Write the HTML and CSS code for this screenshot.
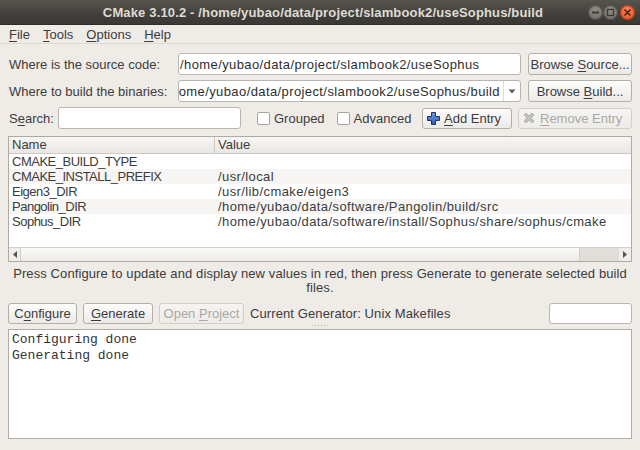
FILE: index.html
```html
<!DOCTYPE html>
<html lang="en">
<head>
<meta charset="utf-8">
<title>CMake</title>
<link rel="stylesheet" href="styles.css">
</head>
<body>
<div class="window">
  <header class="titlebar">
    <span class="title">CMake 3.10.2 - /home/yubao/data/project/slambook2/useSophus/build</span>
    <span class="wbtns">
      <span class="wbtn wbtn-min"><svg width="15" height="15" viewBox="0 0 15 15"><rect x="4" y="6.5" width="7" height="2" fill="#3a3935"/></svg></span>
      <span class="wbtn wbtn-max"><svg width="15" height="15" viewBox="0 0 15 15"><rect x="4.5" y="4.5" width="6" height="6" fill="none" stroke="#3a3935" stroke-width="1.3"/></svg></span>
      <span class="wbtn wbtn-close"><svg width="15" height="15" viewBox="0 0 15 15"><path d="M5 5L10 10M10 5L5 10" stroke="#4a1e10" stroke-width="1.6" stroke-linecap="round"/></svg></span>
    </span>
  </header>
  <nav class="menubar">
    <span><u>F</u>ile</span><span><u>T</u>ools</span><span><u>O</u>ptions</span><span><u>H</u>elp</span>
  </nav>
  <main class="content">
    <div class="paths">
      <span class="label">Where is the source code:</span>
      <div class="field"><span class="field-text path">/home/yubao/data/project/slambook2/useSophus</span></div>
      <div class="btn"><span>Browse <u>S</u>ource...</span></div>
      <span class="label">Where to build the binaries:</span>
      <div class="field combo">
        <span class="combo-clip"><span class="field-text path">/home/yubao/data/project/slambook2/useSophus/build</span></span>
        <span class="combo-arrow"><svg width="8" height="5" viewBox="0 0 8 5"><path d="M0.5 0.5H7.5L4 4.5Z" fill="#5e5c58"/></svg></span>
      </div>
      <div class="btn"><span>Browse <u>B</u>uild...</span></div>
    </div>

    <div class="searchrow">
      <span class="label search-label">S<u>e</u>arch:</span>
      <div class="field search"></div>
      <span class="check"><span class="box"></span>Grouped</span>
      <span class="check"><span class="box"></span>Advanced</span>
      <div class="btn add">
        <svg width="13" height="13" viewBox="0 0 13 13"><defs><linearGradient id="pg" x1="0" y1="0" x2="0" y2="1"><stop offset="0" stop-color="#6f9ae0"/><stop offset="1" stop-color="#2f5fb3"/></linearGradient></defs><path d="M4.5 0.5H8.5V4.5H12.5V8.5H8.5V12.5H4.5V8.5H0.5V4.5H4.5Z" fill="url(#pg)" stroke="#1c3566" stroke-width="1"/></svg>
        <span><u>A</u>dd Entry</span>
      </div>
      <div class="btn disabled remove">
        <svg width="12" height="12" viewBox="0 0 12 12"><path d="M1 3L3 1L6 4L9 1L11 3L8 6L11 9L9 11L6 8L3 11L1 9L4 6Z" fill="#c2c0bc" stroke="#a9a7a3" stroke-width="0.8" stroke-linejoin="round"/></svg>
        <span><u>R</u>emove Entry</span>
      </div>
    </div>

    <div class="table">
      <div class="thead"><span class="cell">Name</span><span class="cell">Value</span></div>
      <div class="tbody">
        <div class="trow"><span class="cell name">CMAKE_BUILD_TYPE</span><span class="cell path"></span></div>
        <div class="trow alt"><span class="cell name">CMAKE_INSTALL_PREFIX</span><span class="cell path">/usr/local</span></div>
        <div class="trow"><span class="cell name">Eigen3_DIR</span><span class="cell path">/usr/lib/cmake/eigen3</span></div>
        <div class="trow alt"><span class="cell name">Pangolin_DIR</span><span class="cell path">/home/yubao/data/software/Pangolin/build/src</span></div>
        <div class="trow"><span class="cell name">Sophus_DIR</span><span class="cell path">/home/yubao/data/software/install/Sophus/share/sophus/cmake</span></div>
      </div>
      <div class="hscroll">
        <span class="sarrow left"><svg width="4" height="7" viewBox="0 0 4 7"><path d="M4 0V7L0 3.5Z" fill="#55534f"/></svg></span>
        <span class="shandle"></span>
        <span class="strough"></span>
        <span class="sarrow right"><svg width="4" height="7" viewBox="0 0 4 7"><path d="M0 0V7L4 3.5Z" fill="#55534f"/></svg></span>
      </div>
    </div>

    <p class="info">Press Configure to update and display new values in red, then press Generate to generate selected build files.</p>

    <div class="actions">
      <div class="btn cfg"><span>C<u>o</u>nfigure</span></div>
      <div class="btn gen"><span><u>G</u>enerate</span></div>
      <div class="btn disabled open"><span>Open <u>P</u>roject</span></div>
      <span class="generator">Current Generator: Unix Makefiles</span>
      <div class="field gen-field"></div>
    </div>
    <div class="splitter"><span class="grip"></span></div>
    <pre class="console">Configuring done
Generating done</pre>
  </main>
</div>
</body>
</html>
```

FILE: styles.css
```css
* { box-sizing: border-box; }
html, body { margin: 0; padding: 0; }
body {
  width: 640px;
  height: 450px;
  overflow: hidden;
  background: #efebe7;
  font-family: "Liberation Sans", Arial, sans-serif;
  font-size: 13px;
  color: #3c3c3c;
}
u {
  text-decoration: underline;
  text-decoration-thickness: 1px;
  text-underline-offset: 2px;
}
.window {
  display: flex;
  flex-direction: column;
  height: 450px;
}

/* title bar */
.titlebar {
  flex: 0 0 25px;
  display: grid;
  grid-template-columns: 1fr auto 1fr;
  align-items: center;
  background: linear-gradient(#55544e, #3e3d39 70%, #3a3935);
  border-bottom: 1px solid #2e2d2a;
}
.title {
  grid-column: 2;
  color: #dfdbd2;
  font-weight: bold;
  font-size: 13px;
  letter-spacing: 0.15px;
  white-space: nowrap;
  padding-left: 6px;
}
.wbtns {
  grid-column: 3;
  justify-self: end;
  display: flex;
  align-items: center;
  padding-right: 5px;
}
.wbtn {
  width: 15px;
  height: 15px;
  border-radius: 50%;
  display: flex;
}
.wbtn-min, .wbtn-max {
  background: radial-gradient(circle at 50% 35%, #8f8d87, #6a6863);
  box-shadow: inset 0 0 0 1px #4b4a45;
}
.wbtn-close {
  margin-left: 2px;
  background: radial-gradient(circle at 50% 35%, #f7875d, #e2471c);
  box-shadow: inset 0 0 0 1px #a83a1a;
}

/* menu bar */
.menubar {
  flex: 0 0 19px;
  display: flex;
  align-items: center;
  gap: 13px;
  padding-left: 9px;
  border-bottom: 1px solid #dcd8d2;
}

/* content */
.content {
  flex: 1;
  min-height: 0;
  display: flex;
  flex-direction: column;
  padding: 9px 8px 11px;
}
.paths {
  display: grid;
  grid-template-columns: 163px 343px 104px;
  grid-auto-rows: 22px;
  column-gap: 7px;
  row-gap: 5px;
}
.label {
  padding-left: 1px;
  align-self: center;
  white-space: nowrap;
}
.path { letter-spacing: 0.4px; }
.field {
  background: #fff;
  border: 1px solid #b9b5af;
  border-radius: 3px;
  display: flex;
  align-items: center;
  padding: 0 1px;
  overflow: hidden;
  white-space: nowrap;
  color: #2e2e2e;
}
.combo { padding: 0; }
.combo-clip {
  flex: 1;
  min-width: 0;
  display: flex;
  justify-content: flex-end;
  overflow: hidden;
  padding-right: 3px;
}
.combo-clip .field-text { flex-shrink: 0; }
.combo-arrow {
  width: 17px;
  align-self: stretch;
  display: flex;
  align-items: center;
  justify-content: center;
  border-left: 1px solid #e0ddd8;
}

.btn {
  display: flex;
  align-items: center;
  justify-content: center;
  border: 1px solid #b3afa9;
  border-radius: 3px;
  background: linear-gradient(#fcfcfb, #ecEAe7);
  white-space: nowrap;
  color: #3c3c3c;
}
.btn.disabled {
  color: #aaa8a4;
  border-color: #d2cec8;
  background: linear-gradient(#f5f4f2, #eeece9);
}

/* search row */
.searchrow {
  display: flex;
  align-items: center;
  height: 22px;
  margin-top: 5px;
}
.search-label { width: 50px; }
.search { width: 183px; height: 22px; }
.check {
  display: flex;
  align-items: center;
  gap: 4px;
  margin-left: 16px;
}
.check + .check { margin-left: 12px; }
.box {
  width: 13px;
  height: 13px;
  background: #fff;
  border: 1px solid #a8a49e;
  border-radius: 2px;
}
.add {
  margin-left: auto;
  width: 90px;
  height: 21px;
  justify-content: flex-start;
  padding-left: 4px;
  gap: 4px;
}
.remove {
  margin-left: 6px;
  width: 114px;
  height: 21px;
  justify-content: flex-start;
  padding-left: 4px;
  gap: 5px;
}

/* table */
.table {
  margin-top: 7px;
  height: 126px;
  flex-shrink: 0;
  border: 1px solid #aeaaa4;
  background: #fff;
  display: flex;
  flex-direction: column;
}
.thead {
  display: grid;
  grid-template-columns: 205px 1fr;
  height: 17px;
  background: linear-gradient(#f7f6f4, #e9e7e4);
  border-bottom: 1px solid #cdc9c3;
  line-height: 16px;
}
.thead .cell + .cell { border-left: 1px solid #cdc9c3; }
.cell {
  padding-left: 3px;
  white-space: nowrap;
  overflow: hidden;
}
.cell.name { letter-spacing: -0.5px; }
.tbody { flex: 1; }
.trow {
  display: grid;
  grid-template-columns: 205px 1fr;
  height: 15px;
  line-height: 15px;
}
.trow .cell + .cell { padding-left: 4px; }
.trow.alt { background: #f6f5f3; }
.hscroll {
  height: 14px;
  display: flex;
  border-top: 1px solid #d3cfca;
  background: #efedea;
}
.sarrow {
  width: 12px;
  display: flex;
  align-items: center;
  justify-content: center;
}
.sarrow.left { border-right: 1px solid #d3cfca; }
.shandle {
  width: 559px;
  background: linear-gradient(#fbfbfa, #eceae7);
  border-right: 1px solid #cfcbc5;
}
.strough {
  flex: 1;
  background: #e1deda;
}

/* info + actions */
.info {
  margin: 5px 0 0;
  text-align: center;
  line-height: 14px;
  padding: 0 2px;
  letter-spacing: 0.1px;
}
.actions {
  display: flex;
  align-items: center;
  gap: 6px;
  height: 21px;
  margin-top: 8px;
}
.actions .btn { height: 21px; }
.cfg { width: 69px; }
.gen { width: 70px; }
.open { width: 85px; }
.generator { white-space: nowrap; letter-spacing: 0.1px; }
.gen-field {
  margin-left: auto;
  width: 83px;
  height: 21px;
}
.splitter {
  height: 5px;
  display: flex;
  justify-content: center;
  align-items: flex-start;
}
.grip {
  width: 16px;
  height: 1px;
  margin-top: 1px;
  background: repeating-linear-gradient(90deg, #b5b1ab 0 1px, transparent 1px 3px);
}
.console {
  flex: 1;
  margin: 0;
  background: #fff;
  border: 1px solid #b0aca6;
  font-family: "Liberation Mono", "Courier New", monospace;
  font-size: 13px;
  line-height: 16px;
  padding: 2px 3px;
  color: #333;
}
```
